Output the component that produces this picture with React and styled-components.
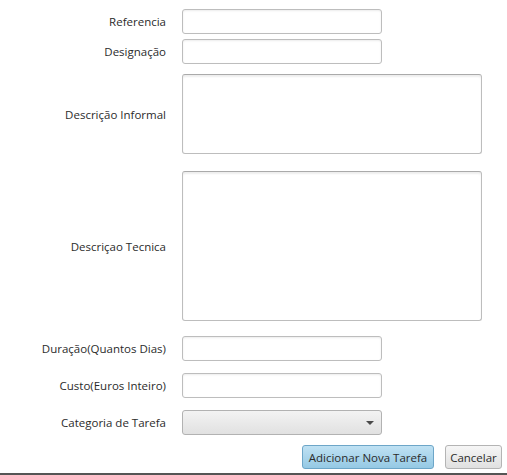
import React from 'react'
import styled, { createGlobalStyle } from 'styled-components'

const GlobalStyle = createGlobalStyle`
  html, body {
    margin: 0;
    padding: 0;
    background: #ffffff;
  }
  body {
    font-family: "Open Sans", "Noto Sans", sans-serif;
    font-size: 11.5px;
    color: #2b2b2b;
  }
`

const Page = styled.div`
  width: 507px;
  height: 475px;
  box-sizing: border-box;
  border-bottom: 2px solid #555555;
  padding-top: 9px;
  display: flex;
  flex-direction: column;
`

const Row = styled.div`
  display: flex;
  align-items: center;
  gap: 16px;
  margin-top: ${props => props.$mt || 0}px;
`

const Label = styled.label`
  width: 166px;
  text-align: right;
  flex-shrink: 0;
  white-space: nowrap;
`

const TextField = styled.input`
  box-sizing: border-box;
  width: 200px;
  height: 25px;
  margin: 0;
  border: 1px solid #bdbdbd;
  border-radius: 3px;
  background: #ffffff;
  box-shadow: inset 0 1px 2px rgba(0, 0, 0, 0.08);
  font: inherit;
  padding: 0 6px;
  outline: none;
`

const TextArea = styled.textarea`
  box-sizing: border-box;
  width: 300px;
  height: ${props => props.$h}px;
  margin: 0;
  border: 1px solid #bdbdbd;
  border-top-color: #aaaaaa;
  border-radius: 3px;
  background: #ffffff;
  box-shadow: inset 0 2px 2px rgba(0, 0, 0, 0.07);
  resize: none;
  font: inherit;
  outline: none;
`

const Combo = styled.div`
  box-sizing: border-box;
  width: 200px;
  height: 25px;
  border: 1px solid #b2b2b2;
  border-radius: 3px;
  background: linear-gradient(#f3f3f3, #e1e1e1);
  display: flex;
  align-items: center;
  justify-content: flex-end;
  padding-right: 7px;
`

const Arrow = styled.span`
  width: 0;
  height: 0;
  border-left: 4px solid transparent;
  border-right: 4px solid transparent;
  border-top: 4px solid #4a4a4a;
`

const Buttons = styled.div`
  display: flex;
  justify-content: flex-end;
  gap: 11px;
  padding-right: 5px;
  margin-top: 10px;
`

const Button = styled.button`
  box-sizing: border-box;
  width: ${props => props.$w}px;
  height: 24px;
  margin: 0;
  padding: 0;
  font: inherit;
  font-size: 11.5px;
  color: #2b2b2b;
  border-radius: 3px;
  border: 1px solid ${props => (props.$primary ? '#6da6c8' : '#b4b4b4')};
  background: ${props =>
    props.$primary
      ? 'linear-gradient(#bfe1f3, #95c9e4)'
      : 'linear-gradient(#f6f6f6, #e0e0e0)'};
`

export default function App() {
  return (
    <>
      <GlobalStyle />
      <Page>
        <Row>
          <Label>Referencia</Label>
          <TextField />
        </Row>
        <Row $mt={5}>
          <Label>Designação</Label>
          <TextField />
        </Row>
        <Row $mt={10}>
          <Label>Descrição Informal</Label>
          <TextArea $h={80} />
        </Row>
        <Row $mt={17}>
          <Label>Descriçao Tecnica</Label>
          <TextArea $h={150} />
        </Row>
        <Row $mt={15}>
          <Label>Duração(Quantos Dias)</Label>
          <TextField />
        </Row>
        <Row $mt={12}>
          <Label>Custo(Euros Inteiro)</Label>
          <TextField />
        </Row>
        <Row $mt={12}>
          <Label>Categoria de Tarefa</Label>
          <Combo>
            <Arrow />
          </Combo>
        </Row>
        <Buttons>
          <Button $primary $w={132}>Adicionar Nova Tarefa</Button>
          <Button $w={57}>Cancelar</Button>
        </Buttons>
      </Page>
    </>
  )
}
